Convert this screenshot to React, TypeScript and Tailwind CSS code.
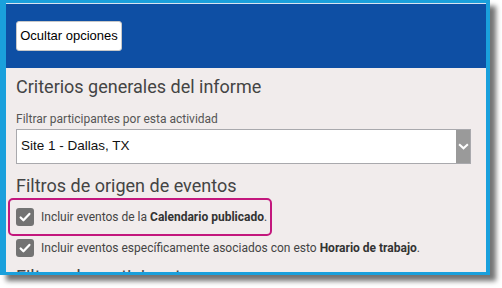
import React from 'react';

const Check = () => (
  <span className="flex h-[18px] w-[18px] shrink-0 items-center justify-center rounded-[3px] bg-[#737373]">
    <svg viewBox="0 0 16 16" className="h-[14px] w-[14px]" fill="none" stroke="white" strokeWidth={2.6} strokeLinecap="round" strokeLinejoin="round">
      <path d="M3 8.5l3.2 3.2L13 4.5" />
    </svg>
  </span>
);

const App: React.FC = () => {
  return (
    <div className="h-[288px] w-[502px] bg-white">
      <div className="h-[275px] w-[490px] overflow-hidden border-t-[3px] border-b-[3px] border-l-[6px] border-r-[4px] border-[#1aa0dc] shadow-[6px_6px_5px_rgba(0,0,0,0.55)]">
        <div className="h-full bg-[#f1ecec] font-['Roboto',sans-serif]">
          {/* header */}
          <div className="h-[65px] border-t border-[#d7e3f1] bg-[#0e4fa4] px-[10px] pt-[17px]">
            <button className="h-[30px] w-[106px] rounded-[3px] border border-[#c8c8c8] bg-white font-['Liberation_Sans',Arial,sans-serif] text-[13px] text-black">
              Ocultar opciones
            </button>
          </div>

          <div className="px-[10px] pr-[15px] pt-[7px]">
            <h2 className="text-[18px] leading-[24px] text-[#444]">Criterios generales del informe</h2>

            <div className="mt-[13px] text-[12px] leading-[14px] text-[#555]">Filtrar participantes por esta actividad</div>
            <div className="mt-[3px] flex h-[35px] border border-[#a9a9ad] bg-white">
              <div className="flex flex-1 items-center pl-[4px] font-['Liberation_Sans',Arial,sans-serif] text-[13.5px] text-[#111]">
                Site 1 - Dallas, TX
              </div>
              <div className="flex w-[14px] items-center justify-center bg-[#9a9a9a]">
                <svg viewBox="0 0 12 8" className="h-[7px] w-[11px]" fill="none" stroke="white" strokeWidth={2.4}>
                  <path d="M1 1.5l5 4.5 5-4.5" />
                </svg>
              </div>
            </div>

            <h2 className="mt-[10px] text-[18px] leading-[24px] text-[#444]">Filtros de origen de eventos</h2>

            <div className="-ml-[8px] flex h-[38px] w-[264px] items-center gap-[7px] rounded-[5px] border-[2.5px] border-[#c3177d] pl-[6px]">
              <Check />
              <span className="whitespace-nowrap text-[12px] text-[#444]">
                Incluir eventos de la <b className="font-bold text-[#333]">Calendario publicado</b>.
              </span>
            </div>

            <div className="mt-[3px] flex h-[17px] items-center gap-[7px]">
              <Check />
              <span className="whitespace-nowrap text-[12px] text-[#444]">
                Incluir eventos específicamente asociados con esto <b className="font-bold text-[#333]">Horario de trabajo</b>.
              </span>
            </div>

            <h2 className="mt-[9px] text-[18px] leading-[24px] text-[#444]">Filtros de participantes</h2>
          </div>
        </div>
      </div>
    </div>
  );
};

export default App;
